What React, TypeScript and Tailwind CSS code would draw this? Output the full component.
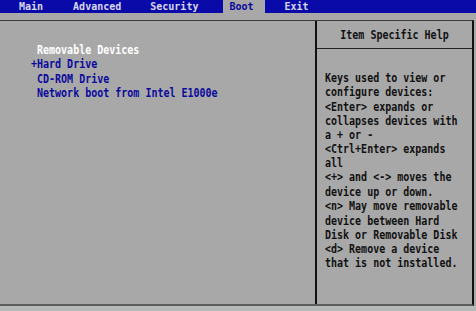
const MONO = "font-['DejaVu_Sans_Mono','Liberation_Mono',monospace]";

const HELP_LINES = [
  "Keys used to view or",
  "configure devices:",
  "<Enter> expands or",
  "collapses devices with",
  "a + or -",
  "<Ctrl+Enter> expands",
  "all",
  "<+> and <-> moves the",
  "device up or down.",
  "<n> May move removable",
  "device between Hard",
  "Disk or Removable Disk",
  "<d> Remove a device",
  "that is not installed.",
];

const BOOT_ITEMS = [
  { label: " Removable Devices", color: "text-white" },
  { label: "+Hard Drive", color: "text-[#0a0a9c]" },
  { label: " CD-ROM Drive", color: "text-[#0a0a9c]" },
  { label: " Network boot from Intel E1000e", color: "text-[#0a0a9c]" },
];

export default function App() {
  return (
    <div
      className={`flex h-[311px] w-[476px] flex-col overflow-hidden bg-[#a8a8a8] text-[10px] font-semibold ${MONO}`}
    >
      {/* Menu bar */}
      <div className="flex h-[13px] items-stretch bg-[#0a0aa8] text-[#d8d8ec]">
        <span className="ml-[19px] leading-[13px]">Main</span>
        <span className="ml-[30px] leading-[13px]">Advanced</span>
        <span className="ml-[29px] leading-[13px]">Security</span>
        <span className="ml-[25px] bg-[#a8a8a8] pl-[6px] pr-[11px] leading-[13px] text-[#0a0a9c]">
          Boot
        </span>
        <span className="ml-[20px] leading-[13px]">Exit</span>
      </div>

      {/* Main box */}
      <div className="mt-[7px] flex h-[286px] w-[474px] border-t border-r-2 border-b-2 border-t-[#3c3c3c] border-r-[#111] border-b-[#5c5c5c]">
        {/* Boot order list */}
        <div className="w-[315px] pt-[22px] pl-[31px]">
          <div className="origin-top scale-y-[1.2] whitespace-pre leading-[11.875px]">
            {BOOT_ITEMS.map((item) => (
              <div key={item.label} className={item.color}>
                {item.label}
              </div>
            ))}
          </div>
        </div>

        {/* Help panel */}
        <div className="flex flex-1 flex-col border-l-2 border-l-[#111]">
          <div className="flex h-[28px] items-center justify-center border-b border-b-[#222] text-[#111]">
            <span className="scale-y-[1.2]">Item Specific Help</span>
          </div>
          <div className="pt-[22px] pl-[8px] text-[#111]">
            <div className="origin-top scale-y-[1.2] whitespace-pre leading-[11.875px]">
              {HELP_LINES.map((line, i) => (
                <div key={i}>{line}</div>
              ))}
            </div>
          </div>
        </div>
      </div>

      {/* Bottom strip */}
      <div className="flex-1 bg-[#b3bab8]" />
    </div>
  );
}
